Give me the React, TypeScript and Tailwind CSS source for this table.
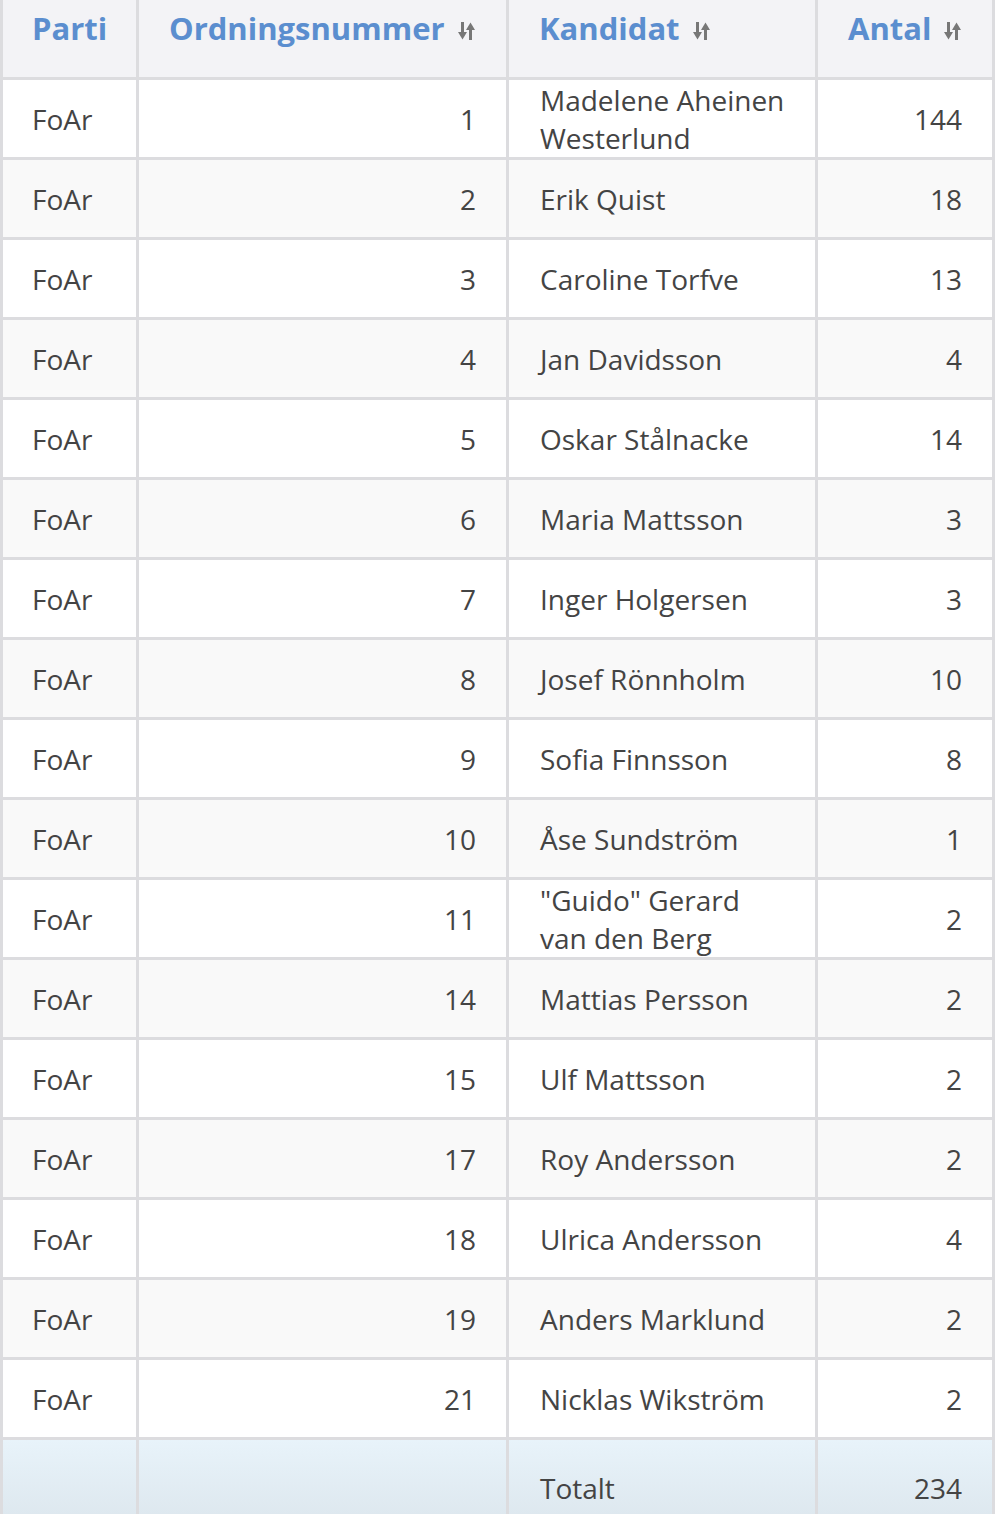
import React from 'react';

type Row = { parti: string; nr: number; kandidat: React.ReactNode; antal: number };

const rows: Row[] = [
  { parti: 'FoAr', nr: 1, kandidat: 'Madelene Aheinen Westerlund', antal: 144 },
  { parti: 'FoAr', nr: 2, kandidat: 'Erik Quist', antal: 18 },
  { parti: 'FoAr', nr: 3, kandidat: 'Caroline Torfve', antal: 13 },
  { parti: 'FoAr', nr: 4, kandidat: 'Jan Davidsson', antal: 4 },
  { parti: 'FoAr', nr: 5, kandidat: 'Oskar Stålnacke', antal: 14 },
  { parti: 'FoAr', nr: 6, kandidat: 'Maria Mattsson', antal: 3 },
  { parti: 'FoAr', nr: 7, kandidat: 'Inger Holgersen', antal: 3 },
  { parti: 'FoAr', nr: 8, kandidat: 'Josef Rönnholm', antal: 10 },
  { parti: 'FoAr', nr: 9, kandidat: 'Sofia Finnsson', antal: 8 },
  { parti: 'FoAr', nr: 10, kandidat: 'Åse Sundström', antal: 1 },
  { parti: 'FoAr', nr: 11, kandidat: '"Guido" Gerard van den Berg', antal: 2 },
  { parti: 'FoAr', nr: 14, kandidat: 'Mattias Persson', antal: 2 },
  { parti: 'FoAr', nr: 15, kandidat: 'Ulf Mattsson', antal: 2 },
  { parti: 'FoAr', nr: 17, kandidat: 'Roy Andersson', antal: 2 },
  { parti: 'FoAr', nr: 18, kandidat: 'Ulrica Andersson', antal: 4 },
  { parti: 'FoAr', nr: 19, kandidat: 'Anders Marklund', antal: 2 },
  { parti: 'FoAr', nr: 21, kandidat: 'Nicklas Wikström', antal: 2 },
];

const SortIcon = () => (
  <svg width="17" height="20" viewBox="0 0 17 20" className="shrink-0 ml-[13px] mt-[13px] text-[#777]" fill="currentColor">
    {/* down arrow */}
    <rect x="3" y="1" width="3" height="13" />
    <path d="M0 11 L4.5 18.5 L9 11 Z" />
    {/* up arrow */}
    <rect x="11" y="6" width="3" height="13" />
    <path d="M8 9 L12.5 1.5 L17 9 Z" />
  </svg>
);

const HeadCell = ({ label, sort, pl = 'pl-[30px]' }: { label: string; sort?: boolean; pl?: string }) => (
  <div className={`bg-[#f3f3f6] h-[77px] ${pl} pt-[8px] flex items-start`}>
    <span className="font-bold text-[31px] text-[#5b8ecf] leading-[40px]">{label}</span>
    {sort && <SortIcon />}
  </div>
);

export default function App() {
  return (
    <div className="w-[1000px] bg-white" style={{ fontFamily: '"Open Sans", "Liberation Sans", sans-serif' }}>
      <div className="w-[995px] grid grid-cols-[133px_367px_306px_174px] gap-[3px] bg-[#dcdcdf] px-[3px] text-[28px] text-[#444]">
        <HeadCell label="Parti" pl="pl-[29px]" />
        <HeadCell label="Ordningsnummer" sort />
        <HeadCell label="Kandidat" sort />
        <HeadCell label="Antal" sort />

        {rows.map((r, i) => {
          const bg = i % 2 === 0 ? 'bg-white' : 'bg-[#f9f9f9]';
          return (
            <React.Fragment key={r.nr}>
              <div className={`${bg} h-[77px] pl-[29px] pr-[30px] flex items-center leading-[38px]`}>{r.parti}</div>
              <div className={`${bg} h-[77px] px-[30px] flex items-center justify-end leading-[38px]`}>{r.nr}</div>
              <div className={`${bg} h-[77px] pl-[31px] pr-[12px] flex items-center leading-[38px]`}>
                <span className="max-w-[247px]">{r.kandidat}</span>
              </div>
              <div className={`${bg} h-[77px] px-[30px] flex items-center justify-end leading-[38px]`}>{r.antal}</div>
            </React.Fragment>
          );
        })}

        <div className="h-[96px] bg-gradient-to-b from-[#e8f3fa] to-[#dbe5ec]" />
        <div className="h-[96px] bg-gradient-to-b from-[#e8f3fa] to-[#dbe5ec]" />
        <div className="h-[96px] px-[31px] flex items-center leading-[38px] bg-gradient-to-b from-[#e8f3fa] to-[#dbe5ec]">Totalt</div>
        <div className="h-[96px] px-[30px] flex items-center justify-end leading-[38px] bg-gradient-to-b from-[#e8f3fa] to-[#dbe5ec]">234</div>
      </div>
    </div>
  );
}
